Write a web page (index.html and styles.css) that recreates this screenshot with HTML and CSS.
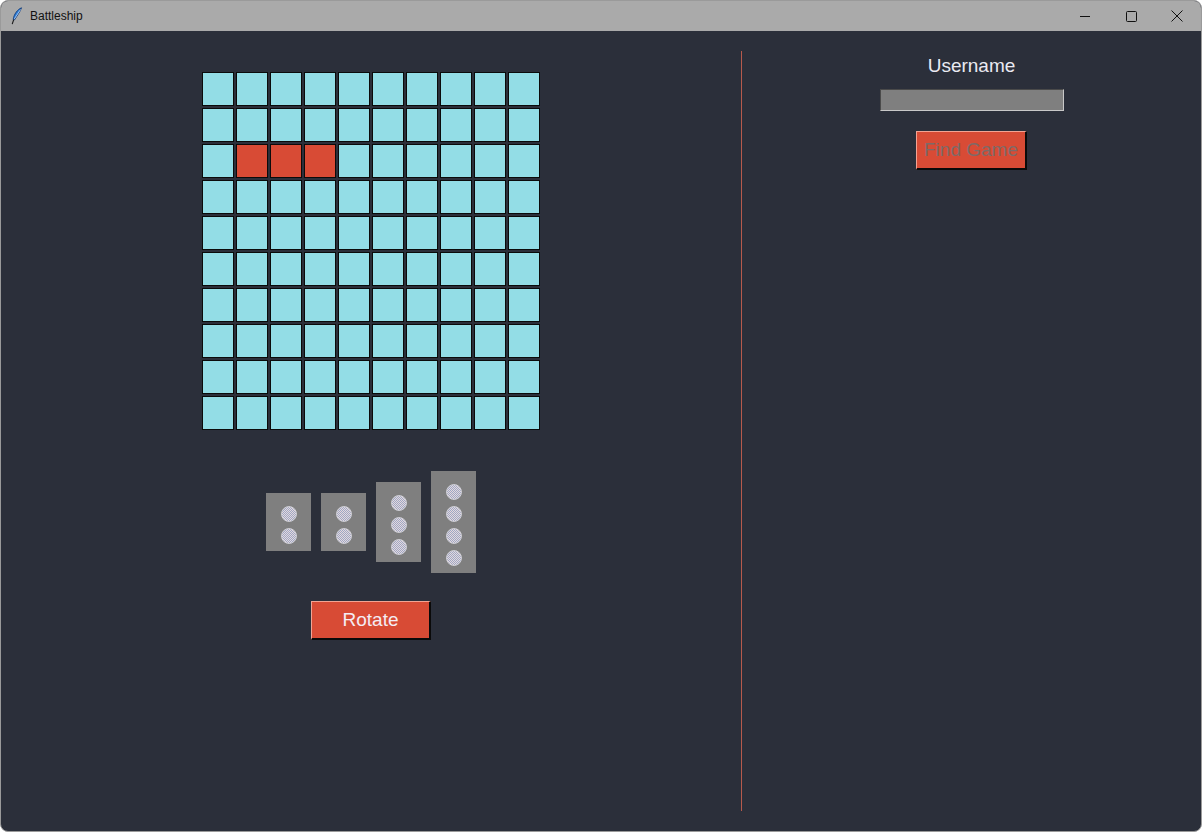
FILE: index.html
```html
<!DOCTYPE html>
<html>
<head>
<meta charset="utf-8">
<title>Battleship</title>
<link rel="stylesheet" href="styles.css">
</head>
<body>
<div class="window">
  <div class="titlebar">
    <div class="title-left">
      <svg class="feather" width="12" height="18" viewBox="0 0 12 18">
        <path d="M10.5 0.8 C6.5 2.5 3 7 2.2 12.5 L3.6 12.8 C5.5 9.5 8.8 5.5 10.5 0.8 Z" fill="#2f7fd8" stroke="#123a78" stroke-width="0.9"/>
        <path d="M9.5 2.5 L3.2 12.2" stroke="#cfe3ff" stroke-width="0.7"/>
        <path d="M2.7 12.6 L1.2 17.2" stroke="#1a1a1a" stroke-width="1.1"/>
      </svg>
      <span class="title-text">Battleship</span>
    </div>
    <div class="controls">
      <svg class="ctl" width="46" height="30" viewBox="0 0 46 30"><path d="M18 15.5 H28" stroke="#111" stroke-width="1"/></svg>
      <svg class="ctl" width="46" height="30" viewBox="0 0 46 30"><rect x="18.5" y="10.5" width="10" height="10" rx="1" fill="none" stroke="#111" stroke-width="1"/></svg>
      <svg class="ctl" width="46" height="30" viewBox="0 0 46 30"><path d="M17.5 9.5 L28.5 20.5 M28.5 9.5 L17.5 20.5" stroke="#111" stroke-width="1"/></svg>
    </div>
  </div>
  <div class="content">
    <div class="left">
      <div class="board">
        <div class="cell"></div><div class="cell"></div><div class="cell"></div><div class="cell"></div><div class="cell"></div><div class="cell"></div><div class="cell"></div><div class="cell"></div><div class="cell"></div><div class="cell"></div>
        <div class="cell"></div><div class="cell"></div><div class="cell"></div><div class="cell"></div><div class="cell"></div><div class="cell"></div><div class="cell"></div><div class="cell"></div><div class="cell"></div><div class="cell"></div>
        <div class="cell"></div><div class="cell ship"></div><div class="cell ship"></div><div class="cell ship"></div><div class="cell"></div><div class="cell"></div><div class="cell"></div><div class="cell"></div><div class="cell"></div><div class="cell"></div>
        <div class="cell"></div><div class="cell"></div><div class="cell"></div><div class="cell"></div><div class="cell"></div><div class="cell"></div><div class="cell"></div><div class="cell"></div><div class="cell"></div><div class="cell"></div>
        <div class="cell"></div><div class="cell"></div><div class="cell"></div><div class="cell"></div><div class="cell"></div><div class="cell"></div><div class="cell"></div><div class="cell"></div><div class="cell"></div><div class="cell"></div>
        <div class="cell"></div><div class="cell"></div><div class="cell"></div><div class="cell"></div><div class="cell"></div><div class="cell"></div><div class="cell"></div><div class="cell"></div><div class="cell"></div><div class="cell"></div>
        <div class="cell"></div><div class="cell"></div><div class="cell"></div><div class="cell"></div><div class="cell"></div><div class="cell"></div><div class="cell"></div><div class="cell"></div><div class="cell"></div><div class="cell"></div>
        <div class="cell"></div><div class="cell"></div><div class="cell"></div><div class="cell"></div><div class="cell"></div><div class="cell"></div><div class="cell"></div><div class="cell"></div><div class="cell"></div><div class="cell"></div>
        <div class="cell"></div><div class="cell"></div><div class="cell"></div><div class="cell"></div><div class="cell"></div><div class="cell"></div><div class="cell"></div><div class="cell"></div><div class="cell"></div><div class="cell"></div>
        <div class="cell"></div><div class="cell"></div><div class="cell"></div><div class="cell"></div><div class="cell"></div><div class="cell"></div><div class="cell"></div><div class="cell"></div><div class="cell"></div><div class="cell"></div>
      </div>
      <div class="fleet">
        <div class="shipbox"><span class="dot"></span><span class="dot"></span></div>
        <div class="shipbox"><span class="dot"></span><span class="dot"></span></div>
        <div class="shipbox"><span class="dot"></span><span class="dot"></span><span class="dot"></span></div>
        <div class="shipbox"><span class="dot"></span><span class="dot"></span><span class="dot"></span><span class="dot"></span></div>
      </div>
      <button class="btn rotate">Rotate</button>
    </div>
    <div class="divider"></div>
    <div class="right">
      <div class="label">Username</div>
      <div class="input"></div>
      <button class="btn find">Find Game</button>
    </div>
  </div>
</div>
</body>
</html>
```
FILE: styles.css
```css
html, body {
  margin: 0;
  padding: 0;
  background: #ffffff;
}
.window {
  width: 1202px;
  height: 832px;
  box-sizing: border-box;
  border-radius: 8px;
  overflow: hidden;
  border: 1px solid #9a9a9a;
  display: flex;
  flex-direction: column;
  background: #2b2f3a;
}
.titlebar {
  height: 30px;
  background: #aaaaaa;
  display: flex;
  justify-content: space-between;
  align-items: center;
  flex: none;
}
.title-left {
  display: flex;
  align-items: center;
  padding-left: 10px;
}
.feather {
  display: block;
  margin-right: 7px;
}
.title-text {
  font-family: "Liberation Sans", Arial, sans-serif;
  font-size: 12px;
  color: #111;
}
.controls {
  display: flex;
  padding-right: 1px;
}
.ctl {
  display: block;
}
.content {
  flex: 1;
  display: flex;
}
.left {
  width: 740px;
  display: flex;
  flex-direction: column;
  align-items: center;
  padding-top: 41px;
}
.board {
  display: grid;
  grid-template-columns: repeat(10, 32px);
  grid-auto-rows: 34px;
  gap: 2px;
}
.cell {
  box-sizing: border-box;
  background: #93dde6;
  border: 1px solid #0b0b0b;
}
.cell.ship {
  background: #d84b35;
}
.fleet {
  margin-top: 41px;
  height: 102px;
  display: flex;
  align-items: center;
  gap: 10px;
}
.shipbox {
  width: 45px;
  box-sizing: border-box;
  background: #7f7f7f;
  display: flex;
  flex-direction: column;
  align-items: center;
  gap: 6px;
  padding: 13px 0 7px;
}
.dot {
  width: 16px;
  height: 16px;
  box-sizing: border-box;
  border-radius: 50%;
  border: 1px solid #cfcfd6;
  background: repeating-conic-gradient(#e4d8de 0 25%, #9ea8c4 0 50%) 0 0 / 2px 2px;
}
.btn {
  box-sizing: border-box;
  height: 39px;
  background: #d84b35;
  border-style: solid;
  border-width: 1px 2px 2px 1px;
  border-color: #f2a494 #0a0a0a #0a0a0a #f2a494;
  font-family: "Liberation Sans", Arial, sans-serif;
  font-size: 19px;
  padding: 0;
  border-radius: 0;
}
.rotate {
  width: 120px;
  margin-top: 28px;
  color: #f4ecf4;
}
.divider {
  width: 1px;
  background: #b65a4c;
  margin: 20px 0 20px;
}
.right {
  flex: 1;
  display: flex;
  flex-direction: column;
  align-items: center;
  padding-top: 24px;
}
.label {
  font-family: "Liberation Sans", Arial, sans-serif;
  font-size: 19px;
  color: #eaeaf2;
  line-height: 22px;
}
.input {
  margin-top: 12px;
  width: 184px;
  height: 22px;
  box-sizing: border-box;
  background: #7f7f7f;
  border-style: solid;
  border-width: 1px;
  border-color: #4a4a4a #c8c8c8 #c8c8c8 #4a4a4a;
}
.find {
  width: 111px;
  margin-top: 20px;
  color: #7d6a68;
}
```
